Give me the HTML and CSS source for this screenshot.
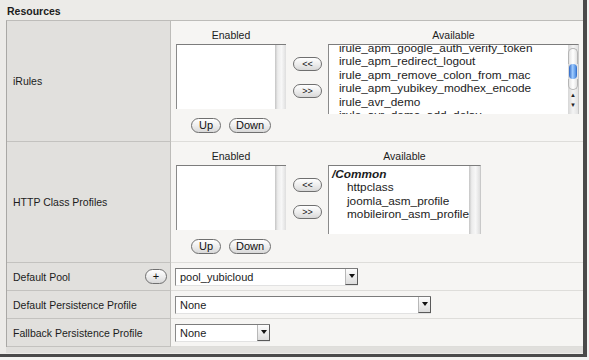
FILE: index.html
```html
<!DOCTYPE html>
<html lang="en">
  <head>
    <meta charset="UTF-8" />
    <title>Resources</title>
    <link rel="stylesheet" href="styles.css">
  </head>
  <body>
    <div class="shot">
      <div class="section-title">Resources</div>
      <div class="props">
        <div class="row tall">
          <div class="label">iRules</div>
          <div class="field">
            <div class="picker">
              <div class="pick-col">
                <div class="pick-head">Enabled</div>
                <div class="listbox enabled-box">
                  <div class="items"></div>
                  <div class="track"></div>
                </div>
                <div class="order">
                  <button class="pill up">Up</button>
                  <button class="pill down">Down</button>
                </div>
              </div>
              <div class="move">
                <button class="pill arrows">&lt;&lt;</button>
                <button class="pill arrows">&gt;&gt;</button>
              </div>
              <div class="pick-col">
                <div class="pick-head">Available</div>
                <div class="listbox avail-rules">
                  <div class="items scrolled">
                    <div class="item">irule_apm_google_auth_verify_token</div>
                    <div class="item">irule_apm_redirect_logout</div>
                    <div class="item">irule_apm_remove_colon_from_mac</div>
                    <div class="item">irule_apm_yubikey_modhex_encode</div>
                    <div class="item">irule_avr_demo</div>
                    <div class="item">irule_avr_demo_add_delay</div>
                  </div>
                  <div class="aqua-bar">
                    <div class="cap"></div>
                    <div class="thumb"></div>
                    <div class="rest"></div>
                    <div class="step">&#9650;</div>
                    <div class="step">&#9660;</div>
                  </div>
                </div>
              </div>
            </div>
          </div>
        </div>

        <div class="row tall">
          <div class="label">HTTP Class Profiles</div>
          <div class="field">
            <div class="picker">
              <div class="pick-col">
                <div class="pick-head">Enabled</div>
                <div class="listbox enabled-box">
                  <div class="items"></div>
                  <div class="track"></div>
                </div>
                <div class="order">
                  <button class="pill up">Up</button>
                  <button class="pill down">Down</button>
                </div>
              </div>
              <div class="move">
                <button class="pill arrows">&lt;&lt;</button>
                <button class="pill arrows">&gt;&gt;</button>
              </div>
              <div class="pick-col">
                <div class="pick-head">Available</div>
                <div class="listbox avail-profiles">
                  <div class="items grouped">
                    <div class="group">/Common</div>
                    <div class="item">httpclass</div>
                    <div class="item">joomla_asm_profile</div>
                    <div class="item">mobileiron_asm_profile</div>
                  </div>
                  <div class="track"></div>
                </div>
              </div>
            </div>
          </div>
        </div>

        <div class="row short">
          <div class="label">
            <span>Default Pool</span>
            <button class="pill plus">+</button>
          </div>
          <div class="field">
            <div class="select pool">
              <span class="val">pool_yubicloud</span>
              <span class="arrow"></span>
            </div>
          </div>
        </div>

        <div class="row short">
          <div class="label">Default Persistence Profile</div>
          <div class="field">
            <div class="select persist">
              <span class="val">None</span>
              <span class="arrow"></span>
            </div>
          </div>
        </div>

        <div class="row short last">
          <div class="label">Fallback Persistence Profile</div>
          <div class="field">
            <div class="select fallback">
              <span class="val">None</span>
              <span class="arrow"></span>
            </div>
          </div>
        </div>
      </div>
      <div class="strip"></div>
    </div>
  </body>
</html>
```

FILE: styles.css
```css
body {
  margin: 0;
  background-color: #f3f3f1;
  font-family: "Liberation Sans", Arial, sans-serif;
  color: #1c1c1c;
}

.shot {
  width: 583px;
  height: 354px;
  background-color: #ecebe8;
  border-right: 4px solid #4a4a4a;
  border-bottom: 3px solid #4a4a4a;
  overflow: hidden;
}

.section-title {
  height: 15px;
  padding: 5px 0 0 7px;
  font-size: 10.5px;
  font-weight: bold;
  line-height: 12px;
}

.props {
  margin-left: 6px;
  width: 576px;
  border-left: 1px solid #a9a8a5;
  border-top: 1px solid #bdbcb9;
}

.row {
  display: flex;
}

.row.tall {
  height: 121px;
}

.row.short {
  height: 28px;
}

.label {
  box-sizing: border-box;
  width: 164px;
  padding: 0 3px 0 6px;
  display: flex;
  align-items: center;
  justify-content: space-between;
  background-color: #e1e0dd;
  border-right: 1px solid #bdbcb9;
  border-bottom: 1px solid #c3c2bf;
  font-size: 10.5px;
}

.field {
  flex: 1;
  display: flex;
  align-items: center;
  padding-left: 4px;
  background-color: #f6f5f3;
  border-bottom: 1px solid #deddda;
}

/* dual list pickers */
.picker {
  display: flex;
  align-items: flex-start;
  padding-left: 1px;
}

.pick-col {
  display: flex;
  flex-direction: column;
  align-items: center;
}

.pick-head {
  font-size: 10.5px;
  line-height: 12px;
  margin-bottom: 3px;
}

.listbox {
  display: flex;
  background-color: #fff;
  border-top: 1px solid #7c7c7c;
  border-left: 1px solid #8a8a8a;
  overflow: hidden;
}

.listbox .items {
  flex: 1;
  font-size: 11.8px;
  line-height: 13.4px;
}

.enabled-box {
  width: 109px;
  height: 64px;
}

.track {
  width: 11px;
  background: linear-gradient(to right, #c4c4c4, #ececec 25%, #f7f7f7 60%, #dedede);
}

.avail-rules {
  width: 249px;
  height: 69px;
  border-right: 1px solid #c9c9c9;
}

.items.scrolled {
  margin-top: -3px;
  padding-left: 10px;
}

.avail-profiles {
  width: 151px;
  height: 68px;
  border-right: 1px solid #c9c9c9;
}

.items.grouped {
  padding: 2px 0 0 3px;
}

.items.grouped .group {
  font-weight: bold;
  font-style: italic;
}

.items.grouped .item {
  padding-left: 15px;
}

.aqua-bar {
  width: 10px;
  display: flex;
  flex-direction: column;
  align-items: center;
  background: linear-gradient(to right, #d6d6d6, #f4f4f4 50%, #e2e2e2);
}

.aqua-bar .cap {
  width: 8px;
  height: 15px;
  margin-top: 3px;
  border: 1px solid #b5b5b5;
  border-bottom: none;
  border-radius: 5px 5px 0 0;
  background: linear-gradient(to right, #e3e3e3, #fff, #e3e3e3);
}

.aqua-bar .thumb {
  width: 8px;
  height: 15px;
  border-radius: 5px;
  background: linear-gradient(to right, #2c66c4, #9fcbff 45%, #5b97e6 80%, #2c66c4);
}

.aqua-bar .rest {
  width: 8px;
  height: 10px;
  border: 1px solid #b5b5b5;
  border-top: none;
  border-radius: 0 0 5px 5px;
  background: linear-gradient(to right, #e3e3e3, #fff, #e3e3e3);
}

.aqua-bar .step {
  font-size: 6px;
  line-height: 10px;
  color: #222;
}

.order {
  display: flex;
  gap: 8px;
  margin-top: 9px;
}

.move {
  display: flex;
  flex-direction: column;
  gap: 13px;
  margin: 28px 6px 0 7px;
}

.pill {
  height: 15px;
  padding: 0;
  border: 1px solid #6f6f6f;
  border-radius: 8px;
  background: linear-gradient(#ffffff, #ececec 55%, #d8d8d8);
  font-family: "Liberation Sans", Arial, sans-serif;
  font-size: 11px;
  line-height: 13px;
  color: #111;
}

.pill.up {
  width: 30px;
}

.pill.down {
  width: 42px;
}

.pill.arrows {
  width: 29px;
  height: 14px;
  font-size: 9px;
  line-height: 12px;
}

.pill.plus {
  width: 22px;
  font-size: 11px;
}

/* drop downs */
.select {
  box-sizing: border-box;
  display: flex;
  height: 18px;
  background-color: #fff;
  border-top: 1px solid #7c7c7c;
  border-left: 1px solid #8a8a8a;
  border-bottom: 1px solid #e2e2e2;
}

.select.pool {
  width: 183px;
}

.select.persist {
  width: 256px;
}

.select.fallback {
  width: 95px;
}

.select .val {
  flex: 1;
  padding-left: 4px;
  font-size: 11px;
  line-height: 16px;
}

.select .arrow {
  box-sizing: border-box;
  width: 13px;
  display: flex;
  align-items: center;
  justify-content: center;
  background: linear-gradient(#fdfdfd, #dcdcdc);
  border-left: 1px solid #b8b8b8;
  border-right: 1px solid #5a5a5a;
  border-bottom: 1px solid #5a5a5a;
}

.select .arrow::after {
  content: "";
  border-left: 3px solid transparent;
  border-right: 3px solid transparent;
  border-top: 4px solid #111;
}

.strip {
  margin-left: 6px;
  height: 6px;
  background-color: #e0dfdc;
}
```
